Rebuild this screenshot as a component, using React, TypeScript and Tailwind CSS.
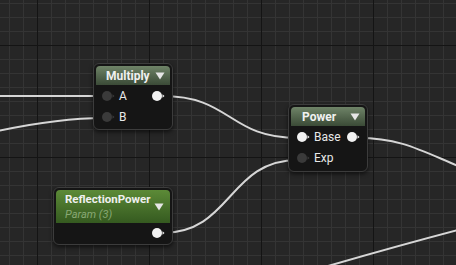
import React from "react";

const font = { fontFamily: "Roboto, 'Liberation Sans', sans-serif" };

function Pin({ filled }: { filled?: boolean }) {
  return (
    <svg width="14" height="12" viewBox="0 0 14 12" className="shrink-0">
      <circle cx="6" cy="6" r="5" fill={filled ? "#f2f2f2" : "#3a3a3a"} />
      <path d="M11.5 4.2 L13.5 6 L11.5 7.8 Z" fill={filled ? "#f2f2f2" : "#3a3a3a"} />
    </svg>
  );
}

function Caret() {
  return (
    <svg width="10" height="8" viewBox="0 0 10 8" className="shrink-0">
      <path d="M0.5 0.5 H9.5 L5 7.5 Z" fill="#e6e6e6" />
    </svg>
  );
}

function Row({ label, filled, out }: { label: string; filled?: boolean; out?: boolean }) {
  return (
    <div className="flex h-[22px] items-center">
      <div className="flex items-center gap-[4px] pl-[5px]">
        <Pin filled={filled} />
        <span className="text-[12px] text-[#e8e8e8]">{label}</span>
      </div>
      <div className="flex-1" />
      {out && (
        <div className="pr-[5px]">
          <Pin filled />
        </div>
      )}
    </div>
  );
}

export default function App() {
  return (
    <div className="relative h-[265px] w-[456px] overflow-hidden bg-[#262626]" style={font}>
      {/* grid + wires */}
      <svg className="absolute inset-0" width="456" height="265">
        <defs>
          <pattern id="minor" x="9" y="3" width="14" height="14" patternUnits="userSpaceOnUse">
            <path d="M0.5 0 V14 M0 0.5 H14" stroke="#343434" strokeWidth="1" />
          </pattern>
          <pattern id="major" x="37" y="45" width="112" height="112" patternUnits="userSpaceOnUse">
            <path d="M0.5 0 V112 M0 0.5 H112" stroke="#141414" strokeWidth="1" />
          </pattern>
        </defs>
        <rect width="456" height="265" fill="url(#minor)" />
        <rect width="456" height="265" fill="url(#major)" />
        <g fill="none" stroke="#d6d6d6" strokeWidth="2" strokeLinecap="round">
          <path d="M-2 96 L104 96" />
          <path d="M-2 131 C40 122 70 118 104 118" />
          <path d="M162 96 C232 96 228 138 298 138" />
          <path d="M162 233 C232 233 228 160 298 160" />
          <path d="M358 138 C400 138 420 150 458 166" />
          <path d="M328 266 C380 251 420 240 458 230" />
        </g>
      </svg>

      {/* Multiply */}
      <div className="absolute left-[93px] top-[63px] flex h-[67px] w-[80px] flex-col rounded-[6px] border border-[#3c3c3c] bg-[#151515] p-[2px] shadow-[0_2px_4px_rgba(0,0,0,0.6)]">
        <div className="flex h-[20px] items-center justify-between rounded-t-[4px] bg-gradient-to-b from-[#6f8468] to-[#3b4b37] pl-[10px] pr-[5px]">
          <span className="text-[12px] font-bold text-[#f0f0f0]">Multiply</span>
          <Caret />
        </div>
        <Row label="A" out />
        <Row label="B" />
      </div>

      {/* Power */}
      <div className="absolute left-[288px] top-[104px] flex h-[68px] w-[80px] flex-col rounded-[6px] border border-[#3c3c3c] bg-[#151515] p-[2px] shadow-[0_2px_4px_rgba(0,0,0,0.6)]">
        <div className="flex h-[20px] items-center justify-between rounded-t-[4px] bg-gradient-to-b from-[#6f8468] to-[#3b4b37] pl-[11px] pr-[5px]">
          <span className="text-[12px] font-bold text-[#f0f0f0]">Power</span>
          <Caret />
        </div>
        <Row label="Base" filled out />
        <Row label="Exp" />
      </div>

      {/* ReflectionPower */}
      <div className="absolute left-[53px] top-[187px] flex h-[58px] w-[120px] flex-col rounded-[6px] border border-[#3c3c3c] bg-[#151515] p-[2px] shadow-[0_2px_4px_rgba(0,0,0,0.6)]">
        <div className="flex h-[33px] items-center justify-between rounded-t-[4px] bg-gradient-to-b from-[#5c8a37] to-[#355a20] pl-[9px] pr-[6px]">
          <div className="flex flex-col leading-[15px]">
            <span className="text-[11.5px] font-bold text-[#f0f0f0]">ReflectionPower</span>
            <span className="text-[11px] italic text-[#88a874]">Param (3)</span>
          </div>
          <Caret />
        </div>
        <div className="flex flex-1 items-center justify-end pr-[5px]">
          <Pin filled />
        </div>
      </div>
    </div>
  );
}
